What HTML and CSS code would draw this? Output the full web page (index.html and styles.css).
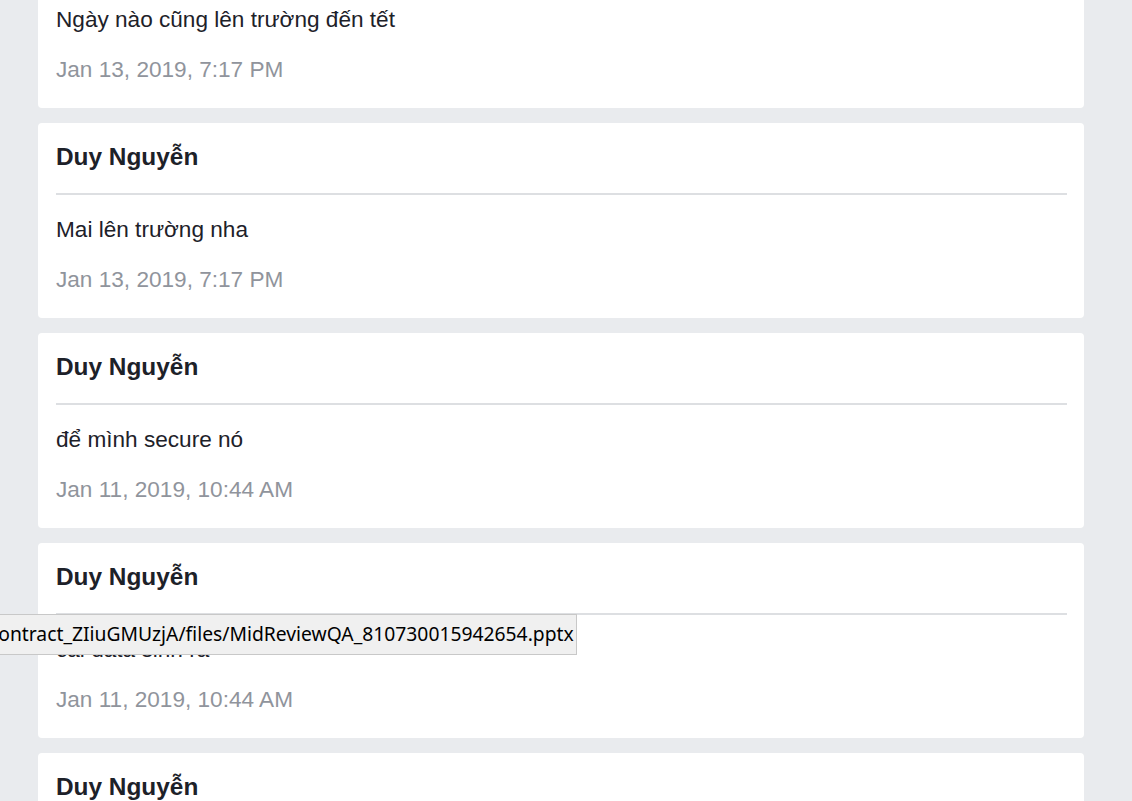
FILE: index.html
```html
<!DOCTYPE html>
<html lang="vi">
<head>
<meta charset="utf-8">
<title>Messages</title>
<link rel="stylesheet" href="styles.css">
</head>
<body>
<div class="feed">
  <div class="card">
    <div class="name">Duy Nguyễn</div>
    <hr class="divider">
    <div class="msg">Ngày nào cũng lên trường đến tết</div>
    <div class="date">Jan 13, 2019, 7:17 PM</div>
  </div>
  <div class="card">
    <div class="name">Duy Nguyễn</div>
    <hr class="divider">
    <div class="msg">Mai lên trường nha</div>
    <div class="date">Jan 13, 2019, 7:17 PM</div>
  </div>
  <div class="card">
    <div class="name">Duy Nguyễn</div>
    <hr class="divider">
    <div class="msg">để mình secure nó</div>
    <div class="date">Jan 11, 2019, 10:44 AM</div>
  </div>
  <div class="card">
    <div class="name">Duy Nguyễn</div>
    <hr class="divider">
    <div class="msg">cái data sinh ra</div>
    <div class="date">Jan 11, 2019, 10:44 AM</div>
  </div>
  <div class="card">
    <div class="name">Duy Nguyễn</div>
    <hr class="divider">
    <div class="msg">ok</div>
    <div class="date">Jan 11, 2019, 10:44 AM</div>
  </div>
</div>
<div class="tooltip"><span class="tip-text">contract_ZIiuGMUzjA/files/MidReviewQA_810730015942654.pptx</span></div>
</body>
</html>
```
FILE: styles.css
```css
html, body {
  margin: 0;
  padding: 0;
  background: #e9ebee;
  height: 100%;
  overflow: hidden;
}
body {
  font-family: "Liberation Sans", Arial, sans-serif;
  color: #1d2129;
}
.feed {
  width: 1046px;
  margin-left: 38px;
  margin-top: -87px;
  display: flex;
  flex-direction: column;
  gap: 15px;
}
.card {
  background: #fff;
  border-radius: 4px;
  padding: 18px 18px 23px;
  height: 195px;
  box-sizing: border-box;
}
.name {
  font-size: 24.4px;
  font-weight: bold;
  line-height: 32px;
}
.divider {
  border: 0;
  height: 2px;
  background: #dddfe2;
  margin: 20px -1px 20px 0;
}
.msg {
  font-size: 22.6px;
  line-height: 30px;
}
.date {
  margin-top: 20px;
  font-size: 22.6px;
  line-height: 30px;
  color: #90949c;
}
.tooltip {
  position: absolute;
  left: 0;
  top: 614px;
  width: 577px;
  height: 41px;
  box-sizing: border-box;
  background: #f0f0f0;
  border: 1px solid #c8c8c8;
  border-left: 0;
  overflow: hidden;
  white-space: nowrap;
  font-family: "Noto Sans", "Open Sans", sans-serif;
  font-size: 19.3px;
  line-height: 38px;
  color: #000;
}
.tip-text {
  display: inline-block;
  margin-left: -11px;
}
```
